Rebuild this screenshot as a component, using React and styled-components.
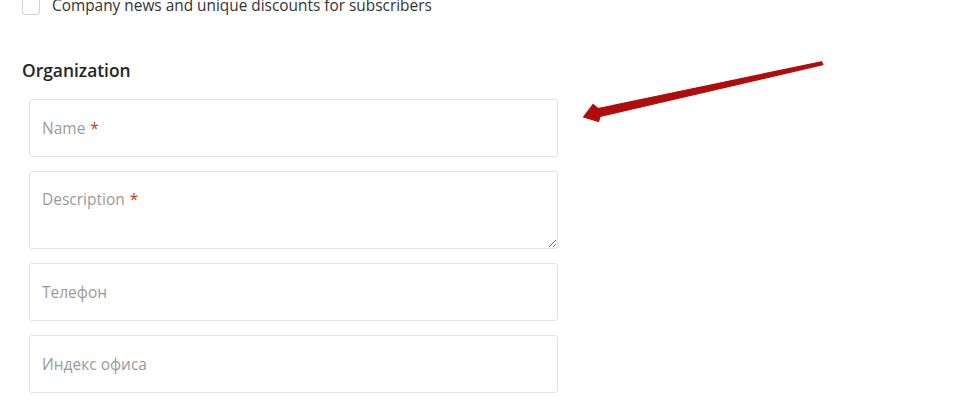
import React from "react";
import styled, { createGlobalStyle } from "styled-components";

const Global = createGlobalStyle`
  html, body { margin: 0; padding: 0; background: #fff; }
  body { font-family: "Open Sans", "Liberation Sans", sans-serif; color: #333; overflow: hidden; }
  * { box-sizing: border-box; }
`;

const Page = styled.div`
  position: relative;
  width: 966px;
  height: 409px;
  padding-left: 22px;
  overflow: hidden;
`;

const CheckRow = styled.label`
  display: flex;
  align-items: center;
  gap: 12px;
  margin-top: -5px;
  font-size: 15.4px;
  line-height: 22px;
  color: #333;
`;

const Box = styled.span`
  width: 18px;
  height: 18px;
  border: 1px solid #d2d2d2;
  border-radius: 3px;
  background: #fff;
  flex: none;
`;

const Heading = styled.h3`
  margin: 41px 0 17px;
  font-size: 17.4px;
  line-height: 24px;
  font-weight: 600;
  color: #252525;
`;

const Fields = styled.div`
  display: flex;
  flex-direction: column;
  gap: 14px;
  margin-left: 7px;
  width: 529px;
`;

const Field = styled.div`
  position: relative;
`;

const Input = styled.input`
  display: block;
  width: 100%;
  height: 58px;
  border: 1px solid #e2e2e2;
  border-radius: 3px;
  padding: 0 12px;
  font: inherit;
  font-size: 15.5px;
  outline: none;
`;

const Area = styled.textarea`
  display: block;
  width: 100%;
  height: 78px;
  border: 1px solid #e2e2e2;
  border-radius: 3px;
  padding: 18px 12px;
  font: inherit;
  font-size: 15.5px;
  line-height: 20px;
  outline: none;
`;

const Placeholder = styled.span`
  position: absolute;
  left: 13px;
  top: ${(p) => (p.$top ? "18px" : "50%")};
  transform: ${(p) => (p.$top ? "none" : "translateY(-50%)")};
  font-size: 15.5px;
  line-height: 20px;
  color: #9a9a9a;
  pointer-events: none;
`;

const Star = styled.span`
  color: #c8401e;
  margin-left: 5px;
`;

const Arrow = styled.svg`
  position: absolute;
  left: 0;
  top: 0;
  pointer-events: none;
`;

function PField({ label, required, area }) {
  return (
    <Field>
      {area ? <Area /> : <Input />}
      <Placeholder $top={area}>
        {label}
        {required && <Star>*</Star>}
      </Placeholder>
    </Field>
  );
}

export default function App() {
  return (
    <>
      <Global />
      <Page>
        <CheckRow>
          <Box />
          Company news and unique discounts for subscribers
        </CheckRow>
        <Heading>Organization</Heading>
        <Fields>
          <PField label="Name" required />
          <PField label="Description" required area />
          <PField label="Телефон" />
          <PField label="Индекс офиса" />
        </Fields>
        <Arrow width="966" height="409" viewBox="0 0 966 409">
          <path
            d="M821.5 61.8 L822.8 64.6 L600 116.5 L598.5 121.5 L583.5 117 L593 104.5 L598 108.5 Z"
            fill="#b00c0c"
            stroke="#b00c0c"
            strokeWidth="1.2"
            strokeLinejoin="round"
          />
        </Arrow>
      </Page>
    </>
  );
}
